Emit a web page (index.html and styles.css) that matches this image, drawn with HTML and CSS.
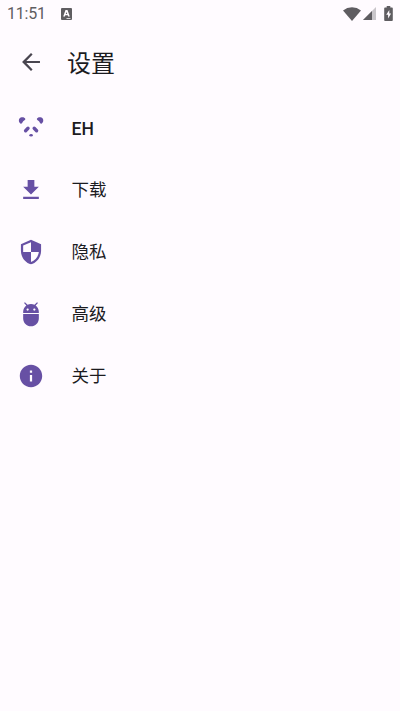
FILE: index.html
```
<!DOCTYPE html>
<html lang="zh-CN">
<head>
<meta charset="utf-8">
<title>设置</title>
<link rel="stylesheet" href="styles.css">
</head>
<body>
<div class="status">
  <span class="time">11:51</span>
  <svg class="keyboard" width="11" height="12" viewBox="0 0 11 12"><path fill-rule="evenodd" d="M1 0h9q1 0 1 1v10q0 1-1 1H1q-1 0-1-1V1q0-1 1-1zM4.500 2 2.200 8.500h1.700l.4-1.200h2.400l.4 1.200h1.700L6.500 2zM5.500 4l.7 2H4.800zM5.500 10v.7h4V10z"/></svg>
  <svg class="wifi" width="18" height="14" viewBox="0 0 18 14"><path d="M0 3.400Q4 .2 9 .2t9 3.200L9 13.900z"/></svg>
  <svg class="signal" width="13" height="13" viewBox="0 0 13 13"><path class="faint" d="M13 0v13H0z"/><path d="M9 4v9H0z"/></svg>
  <svg class="battery" width="9" height="15" viewBox="0 0 9 15"><path fill-rule="evenodd" d="M2.700 0h3.600v1.500H8q.8 0 .8 1V14q0 1-.8 1H1q-.8 0-.8-1V2.500q0-1 .8-1h1.700zM5.300 4 2.200 8.800h1.900v3.600l3-5H5.300z"/></svg>
</div>
<header class="bar">
  <svg class="icon back" viewBox="-.5 -.5 25 25"><path d="M20 11H7.830l5.590-5.590L12 4l-8 8 8 8 1.410-1.410L7.830 13H20v-2z"/></svg>
  <h1>设置</h1>
</header>
<ul class="list">
  <li>
    <svg class="icon" viewBox="0 0 28 28"><path d="M3.700 9.700C1.300 8.300 1.300 4.600 3.700 3.500c1.900-.8 4.100-.2 4.700 1.500C8.200 6.300 7 6.200 6.200 7.300 5.400 8.500 5 9.800 3.700 9.700zM24.500 9.700c2.400-1.400 2.400-5.100 0-6.200-1.900-.8-4.100-.2-4.700 1.500.2 1.300 1.400 1.200 2.200 2.300.8 1.200 1.200 2.500 2.500 2.400z"/><path class="eyes" d="M8.600 16.700l2.400-2.400M19.600 16.700l-2.400-2.400"/><ellipse cx="14.100" cy="21.200" rx="1.800" ry="1.200"/></svg>
    <span class="latin">EH</span>
  </li>
  <li>
    <svg class="icon" viewBox="-.5 -.5 25 25"><path d="M19 9h-4V3H9v6H5l7 7 7-7zM5 18v2h14v-2H5z"/></svg>
    <span>下载</span>
  </li>
  <li>
    <svg class="icon" viewBox="-.5 -.5 25 25"><path d="M12 1L3 5v6c0 5.550 3.840 10.740 9 12 5.160-1.260 9-6.450 9-12V5l-9-4zm0 10.990h7c-.53 4.120-3.280 7.790-7 8.940V12H5V6.300l7-3.110v8.800z"/></svg>
    <span>隐私</span>
  </li>
  <li>
    <svg class="icon" viewBox="-.5 -.5 25 25"><path d="M5 16c0 3.870 3.130 7 7 7s7-3.130 7-7v-4H5v4zM16.120 4.370l2.100-2.100-.82-.83-2.300 2.310C14.160 3.280 13.120 3 12 3s-2.160.28-3.090.75L6.600 1.440l-.82.83 2.100 2.100C6.140 5.640 5 7.680 5 10v1h14v-1c0-2.320-1.140-4.360-2.880-5.630zM9 9c-.55 0-1-.45-1-1s.45-1 1-1 1 .45 1 1-.45 1-1 1zm6 0c-.55 0-1-.45-1-1s.45-1 1-1 1 .45 1 1-.45 1-1 1z"/></svg>
    <span>高级</span>
  </li>
  <li>
    <svg class="icon" viewBox="-.5 -.5 25 25"><path d="M12 2C6.480 2 2 6.480 2 12s4.480 10 10 10 10-4.480 10-10S17.520 2 12 2zm1 15h-2v-6h2v6zm0-8h-2V7h2v2z"/></svg>
    <span>关于</span>
  </li>
</ul>
</body>
</html>
```
FILE: styles.css
```
body {
  margin: 0;
  min-height: 711px;
  background: #fffbff;
  color: #1c1b1f;
  font-family: Roboto, "Noto Sans CJK SC", sans-serif;
}

.status {
  display: flex;
  align-items: center;
  box-sizing: border-box;
  height: 27px;
  padding: 0 7px;
  color: #5f5d61;
  fill: #5f5d61;
}

.time {
  width: 54px;
  padding-top: 1px;
  font-size: 16px;
  line-height: 26px;
  letter-spacing: -0.2px;
}

.wifi {
  margin-left: auto;
}

.signal {
  margin: 0 8px 0 2px;
}

.faint {
  fill: #c9c6ca;
}

.bar {
  display: flex;
  align-items: center;
  height: 70px;
  padding-left: 17px;
}

.icon {
  width: 28px;
  height: 28px;
  flex: none;
  fill: #6750a4;
}

.back {
  fill: #49454f;
}

.eyes {
  fill: none;
  stroke: #6750a4;
  stroke-width: 3.400px;
  stroke-linecap: round;
}

h1 {
  margin: 0 0 0 22px;
  padding-top: 3px;
  font-size: 24px;
  line-height: 36px;
  font-weight: 400;
}

.list {
  margin: 0;
  padding: 0;
  list-style: none;
}

.list li {
  display: flex;
  align-items: center;
  height: 62px;
  padding-left: 17px;
}

.list span {
  margin-left: 26.500px;
  font-size: 17.500px;
  line-height: 26px;
}

.list .latin {
  padding-top: 1px;
  font-weight: 500;
}
```
